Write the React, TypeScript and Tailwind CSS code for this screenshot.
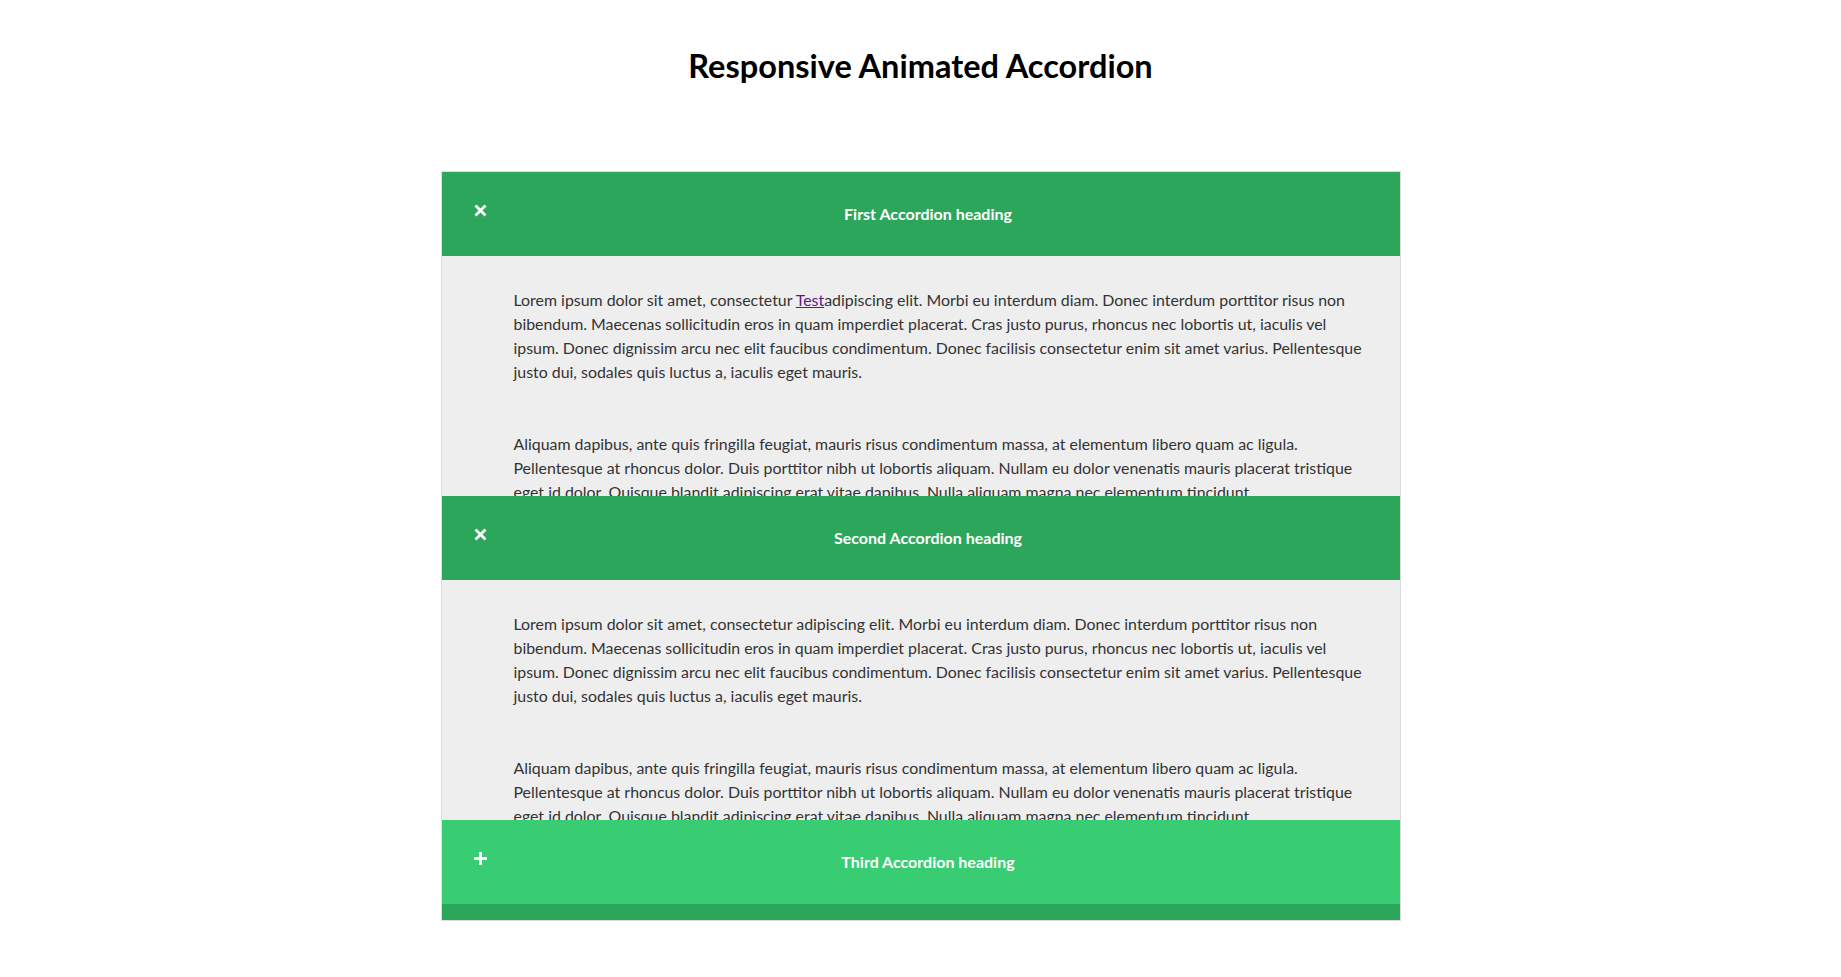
import { useState } from "react";

type Item = {
    title: string;
    link?: boolean;
};

const items: Item[] = [
    { title: "First Accordion heading", link: true },
    { title: "Second Accordion heading" },
    { title: "Third Accordion heading" },
];

function ToggleIcon({ open }: { open: boolean }) {
    if (open) {
        return (
            <svg width="13" height="13" viewBox="0 0 13 13">
                <path d="M2.5 2.5 L10.5 10.5 M10.5 2.5 L2.5 10.5" stroke="white" strokeWidth="2.8" strokeLinecap="square" fill="none" />
            </svg>
        );
    }
    return (
        <svg width="13" height="13" viewBox="0 0 13 13">
            <rect x="5" y="0" width="3" height="13" fill="white" />
            <rect x="0" y="5" width="13" height="3" fill="white" />
        </svg>
    );
}

function Panel({ link }: { link?: boolean }) {
    return (
        <div className="h-[240px] overflow-hidden bg-[#eeeeee] pt-[32px] pl-[72px] pr-[35px] text-[15.9px] leading-[24px] text-[#333333]">
            <p>
                Lorem ipsum dolor sit amet, consectetur {link && <a href="#" className="text-[#551a8b] underline">Test</a>}adipiscing elit. Morbi eu interdum diam. Donec interdum porttitor risus non bibendum. Maecenas sollicitudin eros in quam imperdiet placerat. Cras justo purus, rhoncus nec lobortis ut, iaculis vel ipsum. Donec dignissim arcu nec elit faucibus condimentum. Donec facilisis consectetur enim sit amet varius. Pellentesque justo dui, sodales quis luctus a, iaculis eget mauris.
            </p>
            <p className="mt-[48px]">
                Aliquam dapibus, ante quis fringilla feugiat, mauris risus condimentum massa, at elementum libero quam ac ligula. Pellentesque at rhoncus dolor. Duis porttitor nibh ut lobortis aliquam. Nullam eu dolor venenatis mauris placerat tristique eget id dolor. Quisque blandit adipiscing erat vitae dapibus. Nulla aliquam magna nec elementum tincidunt.
            </p>
        </div>
    );
}

function App() {
    const [open, setOpen] = useState<boolean[]>([true, true, false]);

    function toggle(i: number) {
        setOpen(open.map((v, idx) => (idx === i ? !v : v)));
    }

    return (
        <div className="min-h-screen w-full bg-white font-['Lato','Open_Sans',sans-serif]">
            <h1 className="pt-[46px] text-center text-[32.5px] leading-[40px] font-bold text-black">Responsive Animated Accordion</h1>
            <div className="mx-auto mt-[85px] w-[960px] border border-[#dddddd] bg-[#2ca65a]">
                {items.map((item, i) => (
                    <div key={item.title}>
                        <button
                            type="button"
                            onClick={() => toggle(i)}
                            className={`flex h-[84px] w-full cursor-pointer items-center text-white ${open[i] ? "bg-[#2ca65a]" : "bg-[#38cd72]"}`}
                        >
                            <span className="mb-[8px] flex w-[78px] pl-[32px]">
                                <ToggleIcon open={open[i]} />
                            </span>
                            <span className="flex-1 pr-[63px] text-center text-[16px] font-bold">{item.title}</span>
                        </button>
                        {open[i] && <Panel link={item.link} />}
                    </div>
                ))}
                <div className="h-[16px]" />
            </div>
        </div>
    );
}

export default App;
